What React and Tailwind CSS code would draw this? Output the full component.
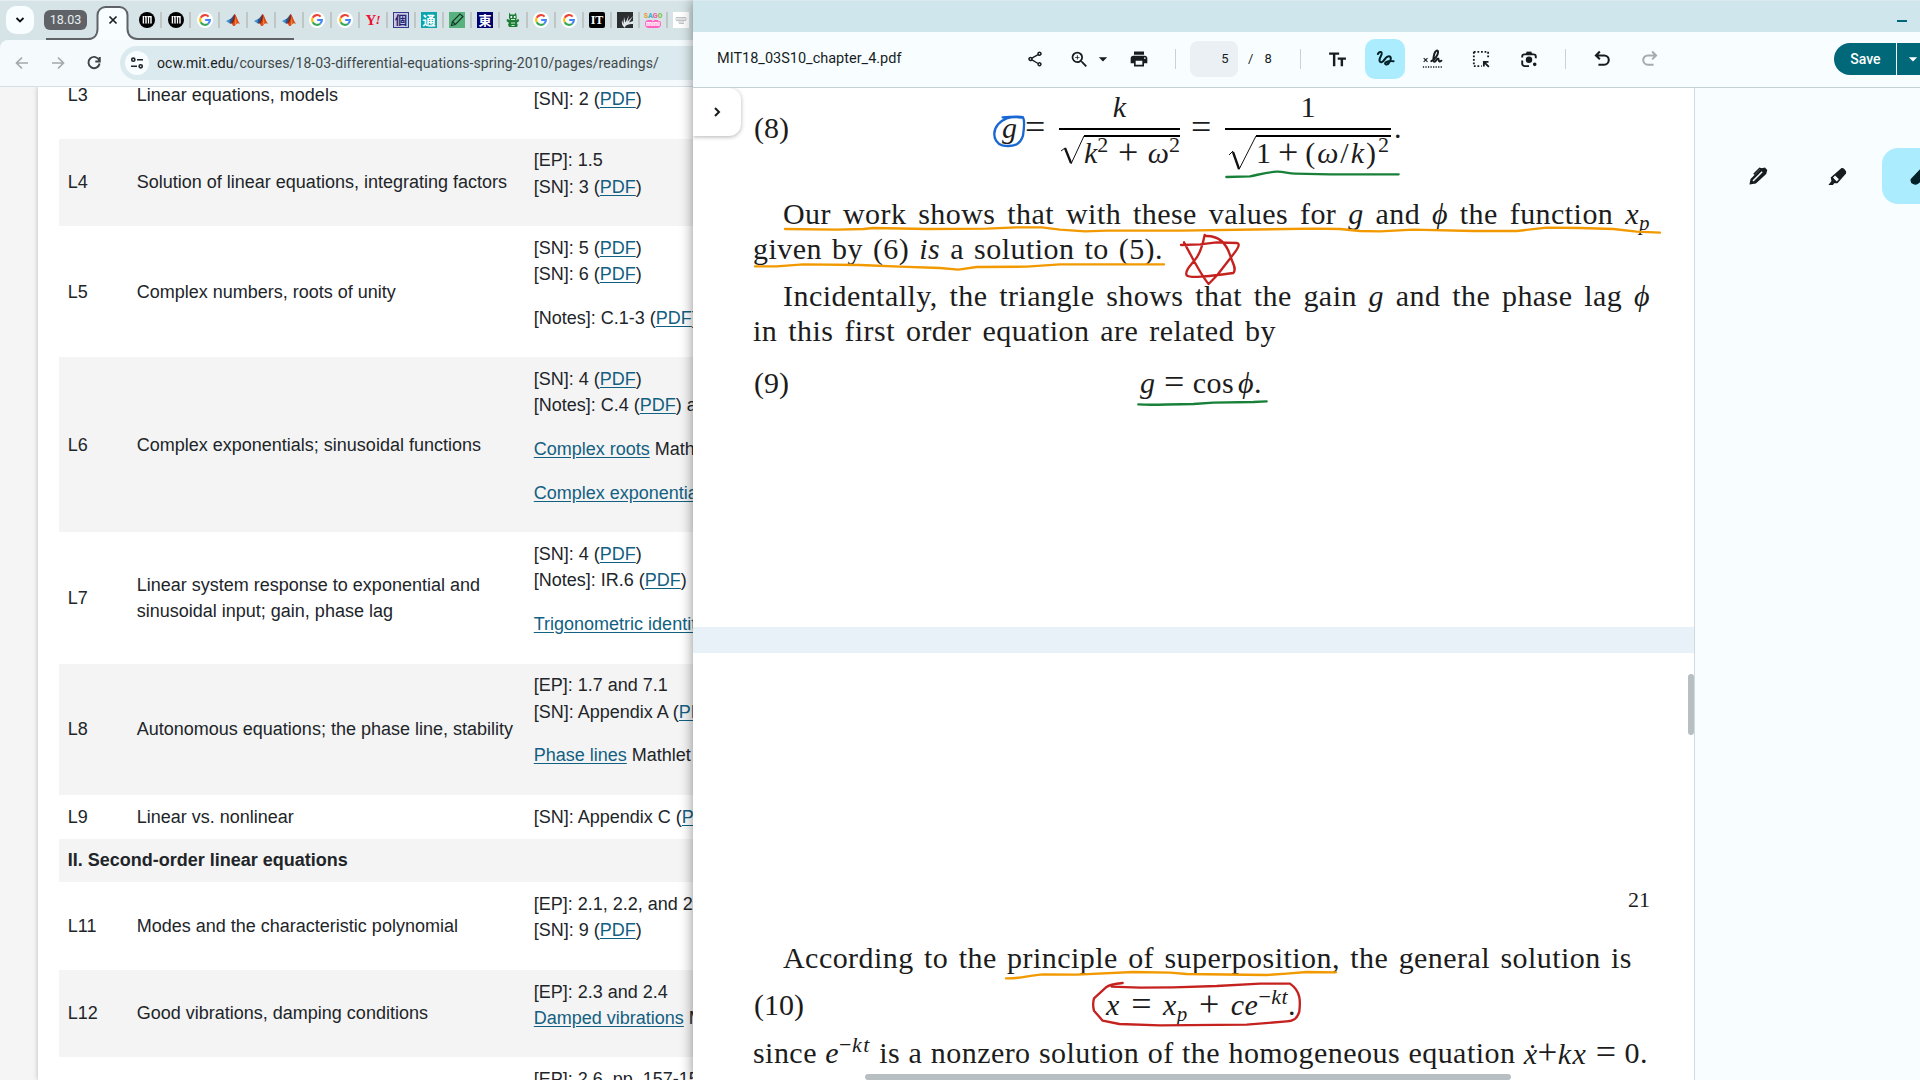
import React from "react";
import { MdOutlineShare, MdOutlineZoomIn, MdArrowDropDown, MdPrint } from "react-icons/md";

/* ---------- favicons ---------- */
const Mit = () => (
  <svg viewBox="0 0 16 16" className="size-4">
    <circle cx="8" cy="8" r="8" fill="#000" />
    <path d="M3.700 4h9v7.500h-1.700V5.500h-.7v6H8.700V5.500H8v6H6.300V5.500h-.7v6H3.700z" fill="#fff" />
    <path d="M5.500 4.500v7M8.200 4.500v7M10.800 5.500v6" stroke="#000" strokeWidth=".9" />
  </svg>
);
const Google = () => (
  <svg viewBox="0 0 16 16" className="size-4">
    <circle cx="8" cy="8" r="8" fill="#fff" />
    <g fill="none" strokeWidth="2.1">
      <path d="M11.6 4.6A4.9 4.9 0 0 0 3.7 5.7" stroke="#ea4335" />
      <path d="M3.7 5.7a4.9 4.9 0 0 0 0 4.6" stroke="#fbbc05" />
      <path d="M3.7 10.3a4.9 4.9 0 0 0 7.5 1.4" stroke="#34a853" />
      <path d="M11.2 11.7A4.9 4.9 0 0 0 12.9 8H8.2" stroke="#4285f4" />
    </g>
  </svg>
);
const Matlab = () => (
  <svg viewBox="0 0 16 16" className="size-4">
    <path d="M1 9l4-2 2 2.4-2.3 2.2z" fill="#3f8fd0" />
    <path d="M5 7c1.500-.3 2.500-2.800 4.600-5l-1 6-2.900 4-1-1z" fill="#25568f" />
    <path d="M9.600 2c1.300 0 2.600 6 5.400 9.800-2-1.200-3.200-.8-5 1.600-.9 1-2 .9-2.700-.9-.5-1-.9-1.400-1.600-1.500C8 9.500 8.500 4 9.600 2z" fill="#d9491f" />
    <path d="M9.600 2c.5 2.500.3 7-2.500 9.500l-1.300-.6C8 9.300 8.500 4 9.600 2z" fill="#7c1d14" />
    <path d="M10.300 4.500c.6 2.500 1.200 5 1 7l-1.600 1.600c.8-2.500.8-5.500.6-8.600z" fill="#f59b2d" />
  </svg>
);
const Yahoo = () => (
  <div className="flex size-4 items-center justify-center font-['Liberation_Serif',serif] text-[15px] leading-4 font-bold text-[#ee1133]">
    <span className="tracking-tighter">Y</span>
    <span className="text-[13px] italic">!</span>
  </div>
);
const Kanji = ({ children, className }) => (
  <div className={"flex size-4 items-center justify-center font-['Noto_Sans_CJK_JP',sans-serif] leading-4 font-bold " + className}>
    {children}
  </div>
);
const Pencil = () => (
  <svg viewBox="0 0 16 16" className="size-4 bg-[#57b27e]">
    <path d="M2.500 13.500l1-4L11 2l3 2.500-7.600 8z M3.500 9.500l2.900 3" fill="none" stroke="#17382a" strokeWidth="1.200" />
  </svg>
);
const Monster = () => (
  <svg viewBox="0 0 16 16" className="size-4">
    <path d="M4 .5l1.500 2h4l1.500-2 .8 5.500-1 2 2.700-1 .7 2-2.500 2 1 1.500-.5 2.500H4l-1-2.500 1-1.500L1.500 9 2 7l3 1-1-2z" fill="#1d7d35" />
    <circle cx="6.300" cy="5" r="1" fill="#fff" />
    <circle cx="9.700" cy="5" r="1" fill="#fff" />
    <path d="M6 7.500h4M6 11h4M6.500 13.500h3" stroke="#cfe8d4" strokeWidth="1" />
  </svg>
);
const Rays = () => (
  <svg viewBox="0 0 16 16" className="size-4 bg-[#2b2d2f]">
    <path d="M8 16c-3-2-3.500-5-3-8l1.500 4L7 5l1.500 5.500L12 3l-1.500 6.500L16 4l-4 6.500L16 9v7z" fill="#dfe6e8" />
    <path d="M8 16c0-3 3-4 8-4v4z" fill="#2b2d2f" />
  </svg>
);
const Sago = () => (
  <div className="flex size-4 flex-col items-center font-['Roboto',sans-serif] leading-none font-black">
    <span className="text-[7px] leading-[8px] font-black text-[#e8a33c]">
      <span>S</span>
      <span className="text-[#3db4c8]">A</span>
      <span className="text-[#ee5fa7]">G</span>
      <span className="text-[#7bc043]">O</span>
    </span>
    <span className="flex h-[8px] w-4 items-center justify-center rounded-full bg-[#ff62c0] text-[7px] leading-[8px] text-white">mini</span>
  </div>
);
const GrayCloud = () => (
  <svg viewBox="0 0 16 16" className="size-4 bg-white">
    <path d="M2 7h12M3 5.500h10M3 8.500h10M5 10h6M6 11.500h5" stroke="#b9bdc1" strokeWidth=".9" />
  </svg>
);

const tabs = [
  Mit, Mit, Google, Matlab, Matlab, Matlab, Google, Google, Yahoo,
  () => <Kanji className="border border-[#3a3a8c] bg-[#c9c9e8] text-[12px] text-[#25256f]">個</Kanji>,
  () => <Kanji className="bg-[#0aa5ad] text-[13px] text-white">通</Kanji>,
  Pencil,
  () => <Kanji className="bg-[#00006e] text-[13px] text-white">東</Kanji>,
  Monster, Google, Google,
  () => (
    <div className="flex size-4 items-center justify-center rounded-xs bg-black font-['Liberation_Serif',serif] text-[12px] leading-4 font-bold text-white">IT</div>
  ),
  Rays, Sago, GrayCloud,
];

/* ---------- left window ---------- */
function TabStrip() {
  return (
    <div className="relative flex h-10 shrink-0 items-center bg-[#d7e4e7] shadow-[inset_0_1px_0_#e4edf0]">
      <div className="ml-1.5 flex size-7 shrink-0 items-center justify-center rounded-[10px] bg-[#f8fdff]">
        <svg viewBox="0 0 10 10" className="size-2.5"><path d="M1.500 3L5 6.500 8.500 3" fill="none" stroke="#111" strokeWidth="1.800" /></svg>
      </div>
      <div className="ml-2.5 flex h-5 w-[43px] shrink-0 items-center justify-center rounded-md bg-[#5f6368] font-['Roboto',sans-serif] text-[12.500px] text-[#e9eef0]">18.03</div>
      <svg viewBox="46 0 248 40" className="absolute top-0 left-[46px] h-10 w-[248px]">
        <path d="M88 40c6 0 9.500-3 9.500-9V15a8 8 0 0 1 8-8h14a8 8 0 0 1 8 8v16c0 6 4 9 10 9z" fill="#f8fdff" />
        <path d="M46 39h42c6 0 9.500-4 9.500-10V15a8 8 0 0 1 8-8h14a8 8 0 0 1 8 8v14c0 6 4 10 10 10H294" fill="none" stroke="#5f6368" strokeWidth="2" />
        <path d="M109.500 16.500l7 7m0-7l-7 7" stroke="#1b2023" strokeWidth="1.700" />
      </svg>
      <div className="ml-[52px] flex shrink-0 items-center">
        {tabs.map((Icon, i) => (
          <div key={i} className={"flex shrink-0 items-center " + (i < 2 ? "w-[29px]" : "w-7")}>
            <Icon />
            {i < tabs.length - 1 && <div className="ml-[5px] h-4 w-[2px] bg-[#c0c5c6]" />}
          </div>
        ))}
      </div>
    </div>
  );
}

function AddressBar() {
  return (
    <div className="shrink-0 bg-[#d7e4e7]">
      <div className="flex h-[46px] items-center rounded-tl-lg bg-[#f5fafd]">
        <svg viewBox="0 0 24 24" className="ml-2.5 size-6 shrink-0" fill="none" stroke="#a4a9ac" strokeWidth="1.700"><path d="M18 12H7M12 6.500L6.500 12l5.500 5.500" /></svg>
        <svg viewBox="0 0 24 24" className="ml-3 size-6 shrink-0" fill="none" stroke="#a4a9ac" strokeWidth="1.700"><path d="M6 12h11M12 6.500l5.500 5.500-5.500 5.500" /></svg>
        <svg viewBox="0 0 24 24" className="ml-3 size-6 shrink-0" fill="none" stroke="#3d4548" strokeWidth="1.900"><path d="M17.300 9.500A5.600 5.600 0 1 0 17.600 12.500M17.800 6v4.500h-4.500" /></svg>
        <div className="ml-[14px] flex h-[34px] min-w-0 flex-1 items-center rounded-l-full bg-[#dbeaee] pl-[5px]">
          <div className="flex size-6 shrink-0 items-center justify-center rounded-full bg-[#f8fdff]">
            <svg viewBox="0 0 16 16" className="size-4" fill="none" stroke="#1f2528" strokeWidth="1.600">
              <circle cx="4.300" cy="4.700" r="1.600" /><path d="M8 4.700h6M2 11.300h6" /><circle cx="11.700" cy="11.300" r="1.600" />
            </svg>
          </div>
          <div className="ml-2 font-['Roboto',sans-serif] text-[14px] tracking-[0.08px] whitespace-nowrap text-[#41484b]"><span className="text-[#1b2023]">ocw.mit.edu</span>/courses/18-03-differential-equations-spring-2010/pages/readings/</div>
        </div>
      </div>
      <div className="h-px bg-[#d3e0e6]" />
    </div>
  );
}

const A = ({ children }) => <a className="text-[#126082] underline underline-offset-[2px]">{children}</a>;
const P = ({ children }) => <p className="mb-[17.5px]">{children}</p>;
const Pdf = () => <>(<A>PDF</A>)</>;

const rows = [
  ["L3", "Linear equations, models", <P>[EP]: 1.4<br />[SN]: 2 <Pdf /></P>],
  ["L4", "Solution of linear equations, integrating factors", <P>[EP]: 1.5<br />[SN]: 3 <Pdf /></P>],
  ["L5", "Complex numbers, roots of unity", <><P>[SN]: 5 <Pdf /><br />[SN]: 6 <Pdf /></P><P>[Notes]: C.1-3 <Pdf /></P></>],
  ["L6", "Complex exponentials; sinusoidal functions", <><P>[SN]: 4 <Pdf /><br />[Notes]: C.4 <Pdf /> and</P><P><A>Complex roots</A> Mathlet</P><P><A>Complex exponential</A></P></>],
  ["L7", <>Linear system response to exponential and<br />sinusoidal input; gain, phase lag</>, <><P>[SN]: 4 <Pdf /><br />[Notes]: IR.6 <Pdf /></P><P><A>Trigonometric identity</A></P></>],
  ["L8", "Autonomous equations; the phase line, stability", <><P>[EP]: 1.7 and 7.1<br />[SN]: Appendix A <Pdf /></P><P><A>Phase lines</A> Mathlet</P></>],
  ["L9", "Linear vs. nonlinear", <>[SN]: Appendix C <Pdf /></>],
  ["II. Second-order linear equations"],
  ["L11", "Modes and the characteristic polynomial", <P>[EP]: 2.1, 2.2, and 2.3<br />[SN]: 9 <Pdf /></P>],
  ["L12", "Good vibrations, damping conditions", <P>[EP]: 2.3 and 2.4<br /><A>Damped vibrations</A> Mathlet</P>],
  ["", "", <P>[EP]: 2.6, pp. 157-159<br />&nbsp;</P>],
];

function CoursePage() {
  return (
    <div className="min-h-0 flex-1 overflow-hidden bg-[#f5f5f5] pl-[38px]">
      <div className="flow-root h-full bg-white shadow-[0_0_5px_rgba(0,0,0,0.25)]">
        <div className="-mt-[36px] ml-[21px] font-['Liberation_Sans',sans-serif] text-[18px] leading-[26.25px] text-[#212529]">
          {rows.map((r, i) => (
            <div key={i} className={"flex items-center " + (i % 2 === 1 ? "bg-[#f4f4f4]" : "bg-white")}>
              {r.length === 1 ? (
                <div className="p-[8.75px] font-bold">{r[0]}</div>
              ) : (
                <>
                  <div className="w-[69px] shrink-0 pl-[8.75px]">{r[0]}</div>
                  <div className="w-[397px] shrink-0 pl-[8.75px] whitespace-nowrap">{r[1]}</div>
                  <div className="shrink-0 p-[8.75px] whitespace-nowrap">{r[2]}</div>
                </>
              )}
            </div>
          ))}
        </div>
      </div>
    </div>
  );
}

/* ---------- right window ---------- */
const Sep = ({ className }) => <div className={"h-5 w-px shrink-0 bg-[#c9d2d5] " + className} />;
const Ic = ({ children, className = "", sw = 2, box = "-2 -2 28 28" }) => (
  <svg viewBox={box} className={"size-5 shrink-0 " + className} fill="none" stroke="currentColor" strokeWidth={sw}>{children}</svg>
);

function PdfToolbar() {
  return (
    <div className="flex h-[55px] shrink-0 items-center overflow-hidden bg-[#f8fdff] pb-px font-['Roboto',sans-serif] text-[#171d1f]">
      <div className="ml-6 w-[309px] shrink-0 text-[14.500px] whitespace-nowrap">MIT18_03S10_chapter_4.pdf</div>
      <MdOutlineShare className="size-[18px] shrink-0" />
      <MdOutlineZoomIn className="ml-[25px] size-[21px] shrink-0" />
      <MdArrowDropDown className="ml-[3px] size-5 shrink-0" />
      <MdPrint className="ml-[16px] size-5 shrink-0" />
      <Sep className="ml-[26px]" />
      <div className="ml-[14px] flex h-9 w-[48px] shrink-0 items-center justify-end rounded-lg bg-[#ebf0f4] pr-[9.500px] text-[13px]">5</div>
      <div className="ml-[10px] shrink-0 text-[13px]">/</div>
      <div className="ml-[11px] w-2 shrink-0 text-[13px]">8</div>
      <Sep className="ml-[28px]" />
      <Ic className="ml-[26px]" sw={3.4}><path d="M1 4.500h14M8 4.500V22M13 11.500H24.500M18.800 11.500V22" /></Ic>
      <div className="ml-[18px] flex h-10 w-10 shrink-0 items-center justify-center rounded-[10px] bg-[#abecff] text-[#001f26]">
        <Ic sw={2.800}><path strokeLinecap="round" strokeLinejoin="round" d="M2 5c1.500-3 5-4 5.500-1C8 6.500 3 11.500 4.500 15c1.300 3 4.500 1.500 7-2.500 2-3 6-6 8-3.500 2 3-2 12-6.500 10.500-3-1.500 1-5.500 11-4.500" /></Ic>
      </div>
      <Ic className="ml-[17px] !size-[22px]" sw={1.800} box="-1 -1 26 26">
        <path strokeWidth="2.300" strokeLinecap="round" d="M10 14.500c4-2 8-7 8-10.500 0-3.500-3-2.500-4.500 2-1 4-2 9 .3 9.200 1.700 0 2.500-3.700 4.200-3.700 1.300 0 .2 3.500 1.500 3.500.8 0 1.500-.6 2.500-1" />
        <path strokeWidth="1.300" d="M1 11l4.500 4.500m0-4.500L1 15.500" /><path strokeDasharray="1.500 1.500" d="M0 21.500h24" />
      </Ic>
      <Ic className="ml-[27px]" sw={2.600}>
        <path strokeDasharray="2.500 2.500" d="M2 2h20v10M2 2v20h11" /><path d="M23 23l-7-7m0 6.500V16h6.500" />
      </Ic>
      <Ic className="ml-[28px]" sw={2.700}>
        <path d="M2.500 10V8.500a3 3 0 0 1 3-3h13a3 3 0 0 1 3 3V11M2.500 14v4.500A3.500 3.500 0 0 0 6 22h6M7.500 4.500h9" /><path d="M8.500 3h7" />
        <circle cx="12" cy="13" r="3.200" fill="currentColor" /><circle cx="20" cy="19.500" r="1.200" fill="currentColor" />
      </Ic>
      <Sep className="ml-[26px]" />
      <Ic className="ml-[26px]" sw={2.900}><path d="M9 1.500L3.500 7l5.500 5.500M4 7h11a6 6 0 0 1 0 13H7" /></Ic>
      <Ic className="ml-[28px] text-[#a6abad]" sw={2.800}><path d="M15 1.500L20.500 7 15 12.500M20 7H9a6 6 0 0 0 0 13h8" /></Ic>
      <div className="ml-[174px] flex h-8 shrink-0 gap-px">
        <div className="flex w-[62px] items-center justify-center rounded-l-full bg-[#006879] text-[14px] font-medium text-white">Save</div>
        <div className="flex w-10 items-center bg-[#006879] pl-1.5 text-white"><MdArrowDropDown className="size-5" /></div>
      </div>
    </div>
  );
}

const I = ({ children, className = "" }) => <i className={"italic " + className}>{children}</i>;
const Sup = ({ children }) => <span className="relative -top-[11px] text-[22px] leading-none">{children}</span>;
const Sub = ({ children }) => <span className="relative top-[6px] text-[21px] leading-none">{children}</span>;
const Op = ({ children }) => <span className="text-[36px] tracking-normal">{children}</span>;

/* one justified text line: words spread over a set measure */
const Line = ({ words, className }) => (
  <div className={"flex h-[35px] justify-between tracking-[0.45px] whitespace-nowrap " + className}>
    {words.map((w, i) => <span key={i}>{w}</span>)}
  </div>
);
const w = (s) => s.split(" ");

function Fraction({ num, den, width, bodyWidth, d }) {
  return (
    <div className="flex flex-col" style={{ width }}>
      <div className="h-[42px] border-b-2 border-black pt-[1px] text-center leading-[35px]">{num}</div>
      <div className="flex pt-[5px]">
        <svg className="h-[38px] shrink-0" style={{ width: width - bodyWidth }} viewBox={`0 0 ${width - bodyWidth} 38`} fill="none" stroke="#111">
          <path d={d[0]} strokeWidth="1" /><path d={d[1]} strokeWidth="2.300" /><path d={d[2]} strokeWidth="1" />
        </svg>
        <div className="flex justify-between border-t-[2.500px] border-black leading-[31px] whitespace-nowrap" style={{ width: bodyWidth }}>{den}</div>
      </div>
    </div>
  );
}

function Ink() {
  return (
    <svg viewBox="693 88 1001 992" className="absolute top-0 left-0 h-[992px] w-[1001px]" fill="none" strokeWidth="7" strokeLinecap="round" strokeLinejoin="round">
      <g transform="translate(740 85) scale(.33333)">
        <path stroke="#1967d2" d="M788 97C815 96 840 92 849 97C854 105 853 125 849 152C845 165 840 172 830 178C815 184 800 184 787 181C770 176 762 160 763 145C764 125 780 108 800 100C815 95 835 96 845 98" />
        <path stroke="#f29900" d="M135 432L290 434L370 432L400 429L560 432L740 431L830 427L905 427L960 434L1035 439L1100 437L1320 437L1640 432L1720 431L1800 432L1860 438L1920 439L2020 434L2200 438L2330 438L2420 428L2520 429L2620 432L2690 440L2760 443" />
        <path stroke="#f29900" d="M45 544L110 544L190 538L360 540L480 545L600 549L655 554L710 546L860 545L960 538L1272 538" />
        <path stroke="#c5221f" d="M1323 480L1380 478L1430 472L1490 474C1505 475 1490 496 1472 518L1432 570L1406 597C1395 585 1380 560 1362 528L1332 472M1394 450C1388 480 1380 510 1362 528C1345 548 1335 560 1340 571C1350 580 1395 575 1480 564C1492 550 1475 530 1470 510C1462 485 1445 452 1398 453" />
      </g>
      <g transform="translate(1180 85) scale(.33333)" stroke="#188038">
        <path d="M139 276L210 274C240 268 265 261 290 260C310 259 325 266 345 266L450 268L656 268" />
        <path d="M-125 958C-80 962 -40 957 40 957L100 953L220 951L260 949" />
      </g>
      <g transform="translate(740 880) scale(.33333)">
        <path stroke="#f29900" d="M798 295C840 297 870 285 910 283L1010 284L1180 276L1290 278L1340 282L1580 285L1640 281L1700 276L1788 277" />
        <path stroke="#c5221f" d="M1148 309C1115 312 1105 316 1098 322L1062 355C1058 370 1060 385 1062 392L1088 422L1138 432L1260 436L1520 434L1640 424C1662 423 1672 415 1678 395C1681 365 1684 335 1650 311L1560 311L1430 318L1300 322L1200 323L1115 320" />
      </g>
    </svg>
  );
}

function PdfPages() {
  return (
    <div className="relative h-[992px] w-[1001px] shrink-0 overflow-hidden bg-white font-['Liberation_Serif',serif] text-[30px] leading-[35px] text-[#1c1c1c]">
      <div className="h-[539px]">
        <div className="flex h-[108px]">
          <div className="ml-[61px] w-[248px] pt-[22px]">(8)</div>
          <I className="w-[23px] pt-[22px]">g</I>
          <div className="w-[34px] pt-[22px]"><Op>=</Op></div>
          <Fraction
            width={121} bodyWidth={96}
            num={<I>k</I>}
            den={<><span><I>k</I><Sup>2</Sup></span><Op>+</Op><span><I>ω</I><Sup>2</Sup></span></>}
            d={["M2 16l4-3", "M6 13l6 15", "M12 29L25 1"]}
          />
          <div className="ml-[11px] w-[34px] pt-[22px]"><Op>=</Op></div>
          <Fraction
            width={166} bodyWidth={135}
            num={<span>1</span>}
            den={<><span>1</span><Op>+</Op><span className="tracking-[2px]">(<I>ω</I>/<I>k</I>)<Sup>2</Sup></span></>}
            d={["M4 20l4-4", "M8 17l6 17", "M14 34.500L31 1"]}
          />
          <div className="ml-[3px] pt-[22px]">.</div>
        </div>
        <Line className="ml-[90px] w-[867px]" words={[...w("Our work shows that with these values for"), <I>g</I>, "and", <I>ϕ</I>, "the", "function", <span><I>x</I><Sub><I>p</I></Sub></span>]} />
        <Line className="ml-[60px] w-[410px]" words={["given", "by", "(6)", <I>is</I>, ...w("a solution to (5).")]} />
        <Line className="mt-3 ml-[90px] w-[867px]" words={[...w("Incidentally, the triangle shows that the gain"), <I>g</I>, ...w("and the phase lag"), <I>ϕ</I>]} />
        <Line className="ml-[60px] w-[523px]" words={w("in this first order equation are related by")} />
        <div className="mt-[17px] flex">
          <div className="ml-[61px] w-[386px]">(9)</div>
          <Line className="w-[122px]" words={[<I>g</I>, <Op>=</Op>, <>cos <I className="-ml-1">ϕ</I>.</>]} />
        </div>
      </div>
      <div className="h-[26px] bg-[#e8f1f7]" />
      <div className="pt-[234px]">
        <div className="mr-[44px] text-right text-[22px] leading-[26px]">21</div>
        <Line className="mt-[27px] ml-[90px] w-[849px]" words={w("According to the principle of superposition, the general solution is")} />
        <div className="mt-[12px] flex">
          <div className="ml-[61px] w-[352px]">(10)</div>
          <Line className="w-[190px]" words={[<I>x</I>, <Op>=</Op>, <><I>x</I><Sub><I>p</I></Sub></>, <Op>+</Op>, <><I>ce</I><Sup>−<I>kt</I></Sup>.</>]} />
        </div>
        <Line className="mt-[13px] ml-[60px] w-[895px]" words={["since", <><I>e</I><Sup>−<I className="tracking-[1.500px]">kt</I></Sup></>, ...w("is a nonzero solution of the homogeneous equation"), <><I>ẋ</I><span className="text-[35px] leading-none">+</span><I className="tracking-[1.500px]">kx</I></>, <Op>=</Op>, "0."]} />
      </div>
      <Ink />
      <div className="absolute top-0 left-0 flex h-12 w-[48px] items-center justify-center rounded-r-xl bg-white shadow-[0_1px_4px_rgba(0,0,0,0.3)]">
        <svg viewBox="0 0 12 12" className="size-3"><path d="M4 2l4 4-4 4" fill="none" stroke="#171d1f" strokeWidth="2" /></svg>
      </div>
      <div className="absolute top-[586px] right-0 h-[61px] w-[6px] rounded-full bg-[#b7bfc2]" />
      <div className="absolute bottom-0 left-[172px] h-[6px] w-[646px] rounded-full bg-[#b7bfc2]" />
    </div>
  );
}

function Brushes() {
  return (
    <div className="flex flex-1 items-start overflow-hidden border-l border-[#cfdadd] bg-[#f8fdff] pt-[60px] text-[#171d1f]">
      <div className="ml-[23px] flex h-14 w-20 shrink-0 items-center justify-center">
        <Ic sw={2} box="0 0 24 24"><path fill="currentColor" d="M3 21l1-5L16 4l4-1 2 2-1 4L9 20l-6 1z" /><path d="M6 18L17 7" stroke="#f8fdff" strokeWidth="1.800" /><path d="M7 10l7-7 3 1" strokeWidth="2" /></Ic>
      </div>
      <div className="flex h-14 w-20 shrink-0 items-center justify-center">
        <Ic sw={1.500} box="0 0 24 24"><path fill="currentColor" d="M2 22l3-4-1-4L16 3.500c2-1 6 2.500 5 5L11 20l-4 0-1.500 2z" /><path d="M7 14l3.500 3.500L12 16l-3.500-3.500z" fill="#f8fdff" stroke="#f8fdff" /></Ic>
      </div>
      <div className="ml-[4px] flex h-14 w-20 shrink-0 items-center rounded-2xl bg-[#abecff] pl-[28px] text-[#001f26]">
        <Ic sw={1.500} box="0 0 24 24"><path fill="currentColor" d="M1.500 16L14 3c3-1 9 4 7 7.500L9 21c-2 1-4 .5-5 0-2-1-3-3-2.500-5z" /></Ic>
      </div>
    </div>
  );
}

export default function App() {
  return (
    <div className="flex h-[1080px] w-[1920px] overflow-hidden bg-white">
      <div className="flex w-[693px] shrink-0 flex-col overflow-hidden">
        <TabStrip />
        <AddressBar />
        <CoursePage />
      </div>
      <div className="relative z-10 flex min-w-0 flex-1 flex-col bg-[#f8fdff] shadow-[0_0_12px_rgba(0,0,0,0.45)]">
        <div className="flex h-8 shrink-0 items-center justify-end border-t border-[#dcebf0] bg-[#cee6ec]">
          <div className="mt-[8px] mr-[13px] h-[2px] w-[10px] bg-[#006879]" />
        </div>
        <PdfToolbar />
        <div className="h-px shrink-0 bg-[#c4d2d6]" />
        <div className="flex flex-1">
          <PdfPages />
          <Brushes />
        </div>
      </div>
    </div>
  );
}
